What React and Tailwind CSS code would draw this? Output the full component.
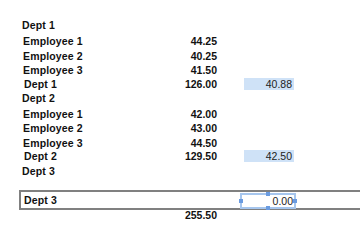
const rows = [
  { label: 'Dept 1', kind: 'head', h: 'h-[16px]' },
  { label: 'Employee 1', kind: 'emp', num: '44.25', h: 'h-[15px]' },
  { label: 'Employee 2', kind: 'emp', num: '40.25', h: 'h-[14px]' },
  { label: 'Employee 3', kind: 'emp', num: '41.50', h: 'h-[14px]' },
  { label: 'Dept 1', kind: 'sum', num: '126.00', avg: '40.88', h: 'h-[14px]' },
  { label: 'Dept 2', kind: 'head', h: 'h-[16px]' },
  { label: 'Employee 1', kind: 'emp', num: '42.00', h: 'h-[14px]' },
  { label: 'Employee 2', kind: 'emp', num: '43.00', h: 'h-[15px]' },
  { label: 'Employee 3', kind: 'emp', num: '44.50', h: 'h-[13px]' },
  { label: 'Dept 2', kind: 'sum', num: '129.50', avg: '42.50', h: 'h-[15px]' },
  { label: 'Dept 3', kind: 'head', h: 'h-[26px]' },
]

const pad = {
  head: 'pl-[22px]',
  emp: 'pl-[23px]',
  sum: 'pl-[24px]',
}

function Row({ row }) {
  return (
    <div className={`flex ${row.h} leading-[14px]`}>
      <div className={`w-[160px] shrink-0 tracking-[0.15px] ${pad[row.kind]}`}>{row.label}</div>
      <div className="w-[57px] shrink-0 text-right">{row.num}</div>
      {row.avg && (
        <div className="ml-[27px] mt-[1px] h-[12px] w-[50px] shrink-0 bg-[#cfe2f7] pr-[2px] text-right font-normal leading-[13px] text-[#222]">
          {row.avg}
        </div>
      )}
    </div>
  )
}

export default function App() {
  return (
    <div className="h-[251px] w-[360px] overflow-hidden bg-white pt-[18px] font-['Liberation_Sans',Arial,sans-serif] text-[10.5px] font-bold text-[#111]">
      {rows.map((row, i) => (
        <Row key={i} row={row} />
      ))}

      {/* selected total row */}
      <div className="ml-[19px] flex h-[20px] border-y-2 border-l-2 border-[#808080]">
        <div className="w-[219px] shrink-0 pl-[3px] leading-[16px] tracking-[0.15px]">Dept 3</div>
        <div className="relative mt-[1px] h-[16px] w-[56px] shrink-0 border-2 border-[#a6c6ee] bg-white pr-[1px] text-right font-normal leading-[12px] text-[#222]">
          0.00
          <span className="absolute -top-[3px] left-[24px] h-[4px] w-[4px] bg-[#6a9be0]" />
          <span className="absolute -bottom-[3px] left-[24px] h-[4px] w-[4px] bg-[#6a9be0]" />
          <span className="absolute top-[4px] -left-[3px] h-[4px] w-[4px] bg-[#6a9be0]" />
          <span className="absolute top-[4px] -right-[3px] h-[4px] w-[4px] bg-[#6a9be0]" />
        </div>
      </div>

      <div className="flex leading-[10px]">
        <div className="w-[160px] shrink-0" />
        <div className="w-[57px] shrink-0 text-right">255.50</div>
      </div>
    </div>
  )
}
